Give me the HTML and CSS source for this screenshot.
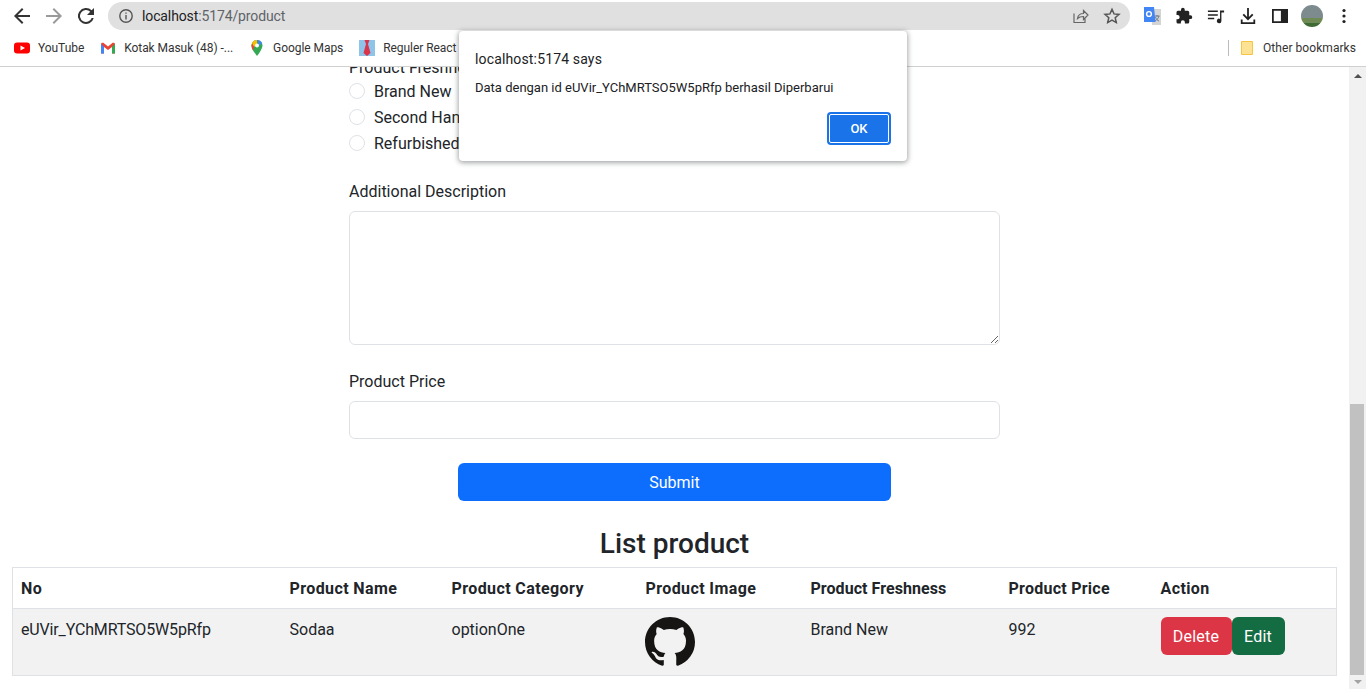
FILE: index.html
```html
<!DOCTYPE html>
<html lang="en">

<head>
    <meta charset="UTF-8">
    <meta name="viewport" content="width=device-width, initial-scale=1.0">
    <title>Product</title>
    <link rel="stylesheet" href="styles.css">
</head>

<body>
    <div class="toolbar">
        <svg class="tool" viewBox="0 0 24 24" width="24" height="24"><path d="M20 11H7.8l5.6-5.6L12 4l-8 8 8 8 1.4-1.4L7.8 13H20z" fill="#333"/></svg>
        <svg class="tool" viewBox="0 0 24 24" width="24" height="24"><path d="M4 11h12.2l-5.6-5.6L12 4l8 8-8 8-1.4-1.4 5.6-5.6H4z" fill="#9a9a9a"/></svg>
        <svg class="tool" viewBox="0 0 24 24" width="24" height="24"><path d="M17.65 6.35A8 8 0 1 0 19.73 14h-2.08a6 6 0 1 1-1.41-6.24L13 11h7V4z" fill="#333"/></svg>
        <div class="omnibox">
            <svg viewBox="0 0 16 16" width="16" height="16"><circle cx="8" cy="8" r="6.2" fill="none" stroke="#555" stroke-width="1.4"/><path d="M7.3 7h1.4v4.4H7.3zM7.3 4.4h1.4v1.4H7.3z" fill="#555"/></svg>
            <span class="url">localhost<span class="url-rest">:5174/product</span></span>
            <svg class="omni-right" viewBox="0 0 18 18" width="18" height="18"><path d="M3 6.5v9h11v-4M6.5 11.5c.5-3.500 3-5 6-5V3.500L17 8l-4.500 4.500V9.500c-2.500 0-4.500.5-6 2z" fill="none" stroke="#666" stroke-width="1.2"/></svg>
            <svg viewBox="0 0 18 18" width="18" height="18"><path d="M9 2.300l2 4.600 5 .5-3.800 3.300 1.100 4.900L9 13.100l-4.300 2.500 1.100-4.900L2 7.400l5-.5z" fill="none" stroke="#555" stroke-width="1.5"/></svg>
        </div>
        <div class="extensions">
            <svg viewBox="0 0 18 18" width="18" height="18"><path d="M8 2h10v16H9z" fill="#d4d4d4"/><path d="M11.500 9h5M14 8v1.500M12 14c2-1 3.500-3 4-5M12.500 10c.5 2 2 3.500 3.500 4" fill="none" stroke="#6b7b8c" stroke-width="1"/><path d="M1 0h10l1.500 15H1z" fill="#4285f4"/><circle cx="6" cy="7" r="2.400" fill="none" stroke="#fff" stroke-width="1.400"/></svg>
            <svg viewBox="0 0 24 24" width="18" height="18"><path d="M20.500 11H19V7a2 2 0 0 0-2-2h-4V3.500a2.500 2.500 0 0 0-5 0V5H4a2 2 0 0 0-2 2v3.800h1.500a2.700 2.700 0 0 1 0 5.400H2V20a2 2 0 0 0 2 2h3.800v-1.500a2.700 2.700 0 0 1 5.400 0V22H17a2 2 0 0 0 2-2v-4h1.500a2.500 2.500 0 0 0 0-5z" fill="#222"/></svg>
            <svg viewBox="0 0 20 18" width="18" height="18"><path d="M1 3h11v1.600H1zM1 7h11v1.600H1zM1 11h7v1.600H1z" fill="#222"/><path d="M14.500 3H19v2h-3v9.500a2.500 2.500 0 1 1-1.500-2.300z" fill="#222"/></svg>
            <svg viewBox="0 0 20 20" width="18" height="18"><path d="M9 1h2v10l3.500-3.500L16 9l-6 6-6-6 1.500-1.500L9 11zM2 14h2v3h12v-3h2v5H2z" fill="#222"/></svg>
            <svg class="panel-icon" viewBox="0 0 18 18" width="16" height="16"><path d="M1 2h16v14H1z" fill="none" stroke="#222" stroke-width="2"/><path d="M10 2h7v14h-7z" fill="#222"/></svg>
            <div class="avatar"></div>
            <svg class="menu-icon" viewBox="0 0 4 16" width="4" height="16"><circle cx="2" cy="2.500" r="1.600" fill="#222"/><circle cx="2" cy="8" r="1.600" fill="#222"/><circle cx="2" cy="13.500" r="1.600" fill="#222"/></svg>
        </div>
    </div>
    <div class="bookmarks">
        <a class="mark"><svg viewBox="0 0 16 16" width="16" height="16"><rect y="2.500" width="16" height="11" rx="3" fill="#f00"/><path d="M6.500 5.500L11 8l-4.500 2.500z" fill="#fff"/></svg>YouTube</a>
        <a class="mark"><svg viewBox="0 0 16 16" width="16" height="16"><path d="M1 3.500v10h3V7l4 3 4-3v6.500h3v-10l-2-1L8 6.500 3 2.500z" fill="#ea4335"/><path d="M1 3.500v10h3V7z" fill="#4285f4"/><path d="M12 7v6.500h3v-10z" fill="#34a853"/></svg>Kotak Masuk (48) -...</a>
        <a class="mark"><svg viewBox="0 0 16 16" width="16" height="16"><path d="M8 0a5.500 5.500 0 0 0-5.500 5.500C2.500 9.500 8 16 8 16s5.500-6.500 5.500-10.500A5.500 5.500 0 0 0 8 0z" fill="#34a853"/><path d="M3 3.500A5.500 5.500 0 0 1 8 0v3.500L5 7z" fill="#fbbc04"/><path d="M8 0a5.500 5.500 0 0 1 5 3L10 6z" fill="#4285f4"/><path d="M3 3.500L5 7l-1 3.500c-1-1.700-1.500-3.400-1.500-5z" fill="#ea4335"/><circle cx="8" cy="5.500" r="2" fill="#fff"/></svg>Google Maps</a>
        <a class="mark"><svg viewBox="0 0 16 16" width="16" height="16"><rect width="16" height="16" fill="#8fc4ea"/><path d="M5.500 0h5L9 4l2.500 9L8 16l-3.500-3L7 4z" fill="#d9344a"/></svg>Reguler React</a>
        <div class="bookmarks-right">
            <span class="divider"></span>
            <a class="mark"><svg viewBox="0 0 16 16" width="16" height="16"><path d="M2.500 1.500h11v13h-11z" fill="#fde293" stroke="#f6c544"/></svg>Other bookmarks</a>
        </div>
    </div>
    <div class="viewport">
        <div class="page">
            <form class="product-form">
                <label class="field-label freshness-label">Product Freshness</label>
                <div class="radio-row"><span class="radio"></span>Brand New</div>
                <div class="radio-row"><span class="radio"></span>Second Hand</div>
                <div class="radio-row"><span class="radio"></span>Refurbished</div>
                <label class="field-label description-label">Additional Description</label>
                <textarea class="form-control description" rows="3"></textarea>
                <label class="field-label price-label">Product Price</label>
                <input class="form-control price" type="text">
                <button class="submit" type="button">Submit</button>
            </form>
            <h2 class="list-title">List product</h2>
            <table class="product-table">
                <thead>
                    <tr>
                        <th class="col-no">No</th>
                        <th class="col-name">Product Name</th>
                        <th class="col-category">Product Category</th>
                        <th class="col-image">Product Image</th>
                        <th class="col-fresh">Product Freshness</th>
                        <th class="col-price">Product Price</th>
                        <th>Action</th>
                    </tr>
                </thead>
                <tbody>
                    <tr>
                        <td class="cell-id">eUVir_YChMRTSO5W5pRfp</td>
                        <td>Sodaa</td>
                        <td>optionOne</td>
                        <td class="cell-media">
                            <svg class="github" viewBox="0 0 16 16" width="50" height="50"><path d="M8 0C3.580 0 0 3.580 0 8c0 3.540 2.290 6.530 5.470 7.590.4.070.55-.17.55-.38 0-.19-.01-.82-.01-1.490-2.010.37-2.530-.49-2.690-.94-.09-.23-.48-.94-.82-1.130-.28-.15-.68-.52-.01-.53.630-.01 1.080.58 1.230.82.720 1.210 1.870.87 2.330.66.070-.52.280-.87.510-1.070-1.780-.2-3.640-.89-3.640-3.950 0-.87.310-1.590.820-2.150-.08-.2-.36-1.020.08-2.120 0 0 .67-.21 2.200.82.640-.18 1.320-.27 2-.27s1.360.09 2 .27c1.530-1.040 2.200-.82 2.200-.82.440 1.100.160 1.920.08 2.120.51.560.82 1.270.82 2.150 0 3.070-1.870 3.750-3.650 3.950.290.25.540.73.540 1.480 0 1.070-.01 1.930-.01 2.200 0 .21.150.46.550.38A8.010 8.010 0 0 0 16 8c0-4.420-3.580-8-8-8z" fill="#161514"/></svg>
                        </td>
                        <td>Brand New</td>
                        <td>992</td>
                        <td class="cell-media"><button class="btn btn-delete" type="button">Delete</button><button class="btn btn-edit" type="button">Edit</button></td>
                    </tr>
                </tbody>
            </table>
        </div>
        <div class="scrollbar">
            <span class="arrow arrow-up"></span>
            <div class="track"><div class="thumb"></div></div>
            <span class="arrow arrow-down"></span>
        </div>
    </div>
    <div class="alert-box">
        <div class="alert-origin">localhost:5174 says</div>
        <div class="alert-message">Data dengan id eUVir_YChMRTSO5W5pRfp berhasil Diperbarui</div>
        <div class="alert-actions"><button class="alert-ok" type="button">OK</button></div>
    </div>
</body>

</html>
```

FILE: styles.css
```css
* {
    box-sizing: border-box;
}

html,
body {
    height: 100%;
    overflow: hidden;
}

body {
    margin: 0;
    display: flex;
    flex-direction: column;
    font-family: Roboto, "Liberation Sans", sans-serif;
    color: #212529;
    background-color: white;
}

.toolbar {
    height: 33px;
    flex: none;
    display: flex;
    align-items: center;
    padding: 0 12px 2px 10px;
}

.tool {
    margin-right: 8px;
}

.omnibox {
    width: 1022px;
    height: 28px;
    margin-left: 2px;
    display: flex;
    align-items: center;
    gap: 14px;
    padding: 0 9px 0 10px;
    border-radius: 14px;
    background-color: #e0e0e0;
    font-size: 14px;
    letter-spacing: -.12px;
    color: #202124;
}

.omnibox>svg:first-child {
    margin-right: -6px;
}

.url-rest {
    color: #5f6368;
}

.omni-right {
    margin-left: auto;
}

.extensions {
    display: flex;
    align-items: center;
    margin-left: 13px;
    gap: 14px;
}

.panel-icon {
    margin-left: 1px;
}

.avatar {
    width: 22px;
    height: 22px;
    margin-left: -1px;
    border-radius: 50%;
    background: linear-gradient(#7d8b8e 0 60%, #6f8a55 60% 80%, #3f6a34 80%);
}

.menu-icon {
    margin-left: 5px;
}

.bookmarks {
    height: 34px;
    flex: none;
    display: flex;
    align-items: center;
    padding: 0 10px 3px 14px;
    gap: 16px;
    border-bottom: 1px solid #d0d0d0;
    font-size: 12px;
    letter-spacing: -.06px;
    color: #333;
}

.mark {
    display: flex;
    align-items: center;
    gap: 8px;
}

.bookmarks-right {
    margin-left: auto;
    display: flex;
    align-items: center;
    gap: 10px;
    letter-spacing: .06px;
}

.divider {
    width: 1px;
    height: 16px;
    background-color: #bbb;
}

.viewport {
    flex: 1;
    min-height: 0;
    display: flex;
}

.page {
    flex: 1;
    min-width: 0;
    overflow: hidden;
    padding: 0 12px;
}

.product-form {
    width: 651px;
    margin: -11px auto 0 337px;
    font-size: 16px;
    line-height: 24px;
}

.field-label {
    display: block;
}

.freshness-label {
    margin-bottom: -1px;
}

.radio-row {
    display: flex;
    align-items: center;
    gap: 9px;
    height: 26px;
    padding-left: 0;
}

.radio {
    width: 16px;
    height: 16px;
    margin-bottom: 2px;
    border-radius: 50%;
    border: 1px solid #dee2e6;
    background-color: white;
}

.description-label {
    margin-top: 23px;
    margin-bottom: 7px;
}

.price-label {
    margin-top: 25px;
    margin-bottom: 7px;
}

.form-control {
    display: block;
    width: 100%;
    border: 1px solid #dee2e6;
    border-radius: 6px;
    background-color: white;
}

.description {
    height: 134px;
}

.price {
    height: 38px;
}

.submit {
    display: block;
    width: 433px;
    height: 38px;
    margin: 24px 0 0 109px;
    padding: 1px 0 0;
    border: 0;
    border-radius: 6px;
    background-color: #0d6efd;
    color: white;
    font: inherit;
}

.list-title {
    margin: 25px 0 5px;
    text-align: center;
    font-size: 28px;
    line-height: 36px;
    font-weight: 500;
}

.product-table {
    width: 100%;
    border-collapse: collapse;
    border: 1px solid #dee2e6;
    font-size: 16px;
    line-height: 24px;
    table-layout: fixed;
}

.product-table th {
    text-align: left;
    font-weight: 700;
    letter-spacing: .4px;
    padding: 9px 8px 7px;
    height: 41px;
    border-bottom: 1px solid #dee2e6;
}

.product-table td {
    vertical-align: top;
    padding: 9px 8px 8px;
    height: 67px;
    background-color: #f2f2f2;
}

.product-table .cell-media {
    padding-top: 8px;
}

.product-table .cell-id {
    letter-spacing: -.15px;
}

.col-no {
    width: 269px;
}

.col-name {
    width: 162px;
}

.col-category {
    width: 194px;
}

.col-image {
    width: 165px;
}

.product-table .col-fresh {
    width: 198px;
    letter-spacing: .05px;
}

.product-table .col-price {
    width: 152px;
    letter-spacing: .25px;
}

.github {
    display: block;
    margin-left: -1px;
}

.btn {
    height: 38px;
    padding: 1px 0 0;
    border: 0;
    border-radius: 6px;
    color: white;
    font: inherit;
    letter-spacing: .2px;
}

.btn-delete {
    width: 71px;
    background-color: #dc3545;
}

.btn-edit {
    width: 53px;
    background-color: #146c43;
}

.scrollbar {
    width: 17px;
    flex: none;
    display: flex;
    flex-direction: column;
    background-color: #f1f1f1;
}

.track {
    flex: 1;
    display: flex;
    flex-direction: column;
    justify-content: flex-end;
    padding: 0 2px 0 1px;
}

.thumb {
    height: 271px;
    background-color: #c1c1c1;
}

.arrow {
    flex: none;
    display: flex;
    justify-content: center;
    align-items: center;
}

.arrow::before {
    content: "";
    border-left: 4px solid transparent;
    border-right: 4px solid transparent;
}

.arrow-up {
    height: 17px;
}

.arrow-up::before {
    border-bottom: 4px solid #505050;
}

.arrow-down {
    height: 14px;
}

.arrow-down::before {
    border-top: 4px solid #a3a3a3;
}

.alert-box {
    position: absolute;
    left: 459px;
    top: 31px;
    width: 448px;
    height: 130px;
    padding: 20px 16px 16px;
    display: flex;
    flex-direction: column;
    border-radius: 4px;
    background-color: white;
    box-shadow: 0 1px 5px 1px rgba(60, 64, 67, .45);
}

.alert-origin {
    font-size: 14px;
    letter-spacing: .15px;
    line-height: 16px;
    color: #202124;
}

.alert-message {
    margin-top: 13px;
    font-size: 13px;
    line-height: 16px;
    color: #202124;
}

.alert-actions {
    margin-top: auto;
    display: flex;
    justify-content: flex-end;
}

.alert-ok {
    width: 64px;
    height: 33px;
    border: 2px solid #1a73e8;
    outline: 1px solid white;
    outline-offset: -3px;
    border-radius: 4px;
    background-color: #1a73e8;
    color: white;
    font-family: inherit;
    font-size: 13px;
    font-weight: 500;
}
```
